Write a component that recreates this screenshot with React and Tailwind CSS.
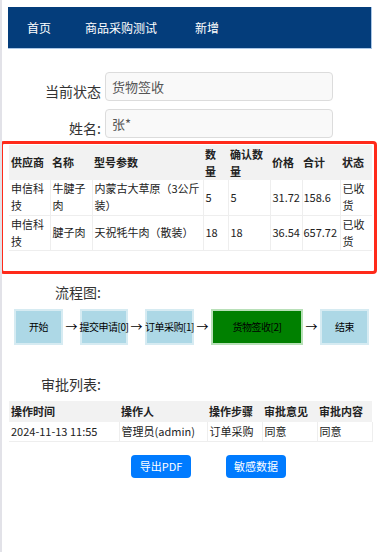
import React from "react";

const font = { fontFamily: '"Noto Sans CJK SC", "Noto Sans", sans-serif' };

export default function App() {
  const flow = [
    { t: "开始", w: "w-[49px]", cur: false },
    { t: "提交申请[0]", w: "w-[48px]", cur: false },
    { t: "订单采购[1]", w: "w-[49px]", cur: false },
    { t: "货物签收[2]", w: "w-[92px]", cur: true },
    { t: "结束", w: "w-[49px]", cur: false },
  ];
  const td = "px-[2px] border-r border-[#eee] align-middle";
  const th = "text-left font-bold px-[2px] align-middle";
  return (
    <div style={font} className="w-[379px] h-[552px] bg-white relative overflow-hidden text-[#333]">
      <div className="absolute left-0 top-0 bottom-0 w-[2px] bg-[#e2e2e8]" />
      {/* header */}
      <div className="pt-[7px] pl-[8px]">
        <div className="w-[364px] h-[42px] bg-[#043d7b] border-b border-r border-[#a9c6e6] flex items-center text-white text-[12px] leading-[16px]">
          <span className="ml-[19px]">首页</span>
          <span className="ml-[34px]">商品采购测试</span>
          <span className="ml-[38px]">新增</span>
        </div>
      </div>

      {/* form */}
      <div className="mt-[23px] flex flex-col gap-[8px]">
        <div className="flex items-end h-[29px]">
          <div className="w-[101px] text-right text-[14px] leading-[20px] text-[#333]">当前状态</div>
          <div className="ml-[4px] w-[228px] h-[29px] rounded-[4px] border border-[#dcdcdc] bg-[#f9f9f9] flex items-center pl-[6px] text-[13px] leading-[18px] text-[#555]">货物签收</div>
        </div>
        <div className="flex items-end h-[29px]">
          <div className="w-[101px] text-right text-[14px] leading-[20px] text-[#333]">姓名:</div>
          <div className="ml-[4px] w-[228px] h-[29px] rounded-[4px] border border-[#dcdcdc] bg-[#f9f9f9] flex items-center pl-[6px] text-[13px] leading-[18px] text-[#555]">张*</div>
        </div>
      </div>

      {/* red box with goods table */}
      <div className="mt-[3px] w-[377px] h-[133px] border-[3px] border-[#ff2a1a] rounded-[4px] pl-[6px] pt-[1px]">
        <table className="w-[363px] table-fixed border-collapse text-[11px] text-[#222] leading-[17px]">
          <colgroup>
            <col className="w-[41px]" />
            <col className="w-[42px]" />
            <col className="w-[111px]" />
            <col className="w-[25px]" />
            <col className="w-[42px]" />
            <col className="w-[32px]" />
            <col className="w-[38px]" />
            <col className="w-[32px]" />
          </colgroup>
          <thead>
            <tr className="bg-[#f2f2f2] h-[35px]">
              <th className={th}>供应商</th>
              <th className={th}>名称</th>
              <th className={th}>型号参数</th>
              <th className={th}>数量</th>
              <th className={th}>确认数量</th>
              <th className={th}>价格</th>
              <th className="text-left font-bold px-[1px] align-middle">合计</th>
              <th className={th}>状态</th>
            </tr>
          </thead>
          <tbody>
            <tr className="h-[35px] border-b border-[#eee]">
              <td className={td}>申信科技</td>
              <td className={td}>牛腱子肉</td>
              <td className={td}>内蒙古大草原（3公斤装）</td>
              <td className={td}>5</td>
              <td className={td}>5</td>
              <td className={td}>31.72</td>
              <td className="px-[1px] border-r border-[#eee] align-middle">158.6</td>
              <td className="px-[2px] align-middle">已收货</td>
            </tr>
            <tr className="h-[35px] border-b border-[#eee]">
              <td className={td}>申信科技</td>
              <td className={td}>腱子肉</td>
              <td className={td}>天祝牦牛肉（散装）</td>
              <td className={td}>18</td>
              <td className={td}>18</td>
              <td className={td}>36.54</td>
              <td className="px-[1px] border-r border-[#eee] align-middle">657.72</td>
              <td className="px-[2px] align-middle">已收货</td>
            </tr>
          </tbody>
        </table>
      </div>

      {/* flow */}
      <div className="mt-[8px] pl-[55px] text-[14px] text-[#333] leading-[20px]">流程图:</div>
      <div className="mt-[7px] pl-[14px] flex items-center h-[36px]">
        {flow.map((f, i) => (
          <React.Fragment key={i}>
            {i > 0 && (
              <div className="w-[17px] text-center text-[12px] leading-[16px] text-black">→</div>
            )}
            <div
              className={`${f.w} h-[36px] flex items-center justify-center whitespace-nowrap text-[10px] leading-[14px] tracking-[-0.5px] text-black border-2 ${
                f.cur ? "bg-[#008000] border-[#b8e0b8]" : "bg-[#add8e6] border-[#d6ebf2]"
              }`}
            >
              {f.t}
            </div>
          </React.Fragment>
        ))}
      </div>

      {/* approvals */}
      <div className="mt-[29px] pl-[41px] text-[14px] text-[#333] leading-[20px]">审批列表:</div>
      <div className="mt-[7px] pl-[9px]">
        <table className="w-[363px] table-fixed border-collapse text-[11px] leading-[15px] text-[#222]">
          <colgroup>
            <col className="w-[110px]" />
            <col className="w-[88px]" />
            <col className="w-[55px]" />
            <col className="w-[55px]" />
            <col className="w-[55px]" />
          </colgroup>
          <thead>
            <tr className="bg-[#f2f2f2] h-[21px]">
              <th className={th}>操作时间</th>
              <th className={th}>操作人</th>
              <th className={th}>操作步骤</th>
              <th className={th}>审批意见</th>
              <th className={th}>审批内容</th>
            </tr>
          </thead>
          <tbody>
            <tr className="h-[19px] border-b border-[#eee]">
              <td className={`${td} whitespace-nowrap`}>2024-11-13 11:55</td>
              <td className={td}>管理员(admin)</td>
              <td className={td}>订单采购</td>
              <td className={td}>同意</td>
              <td className={td}>同意</td>
            </tr>
          </tbody>
        </table>
      </div>

      {/* buttons */}
      <div className="mt-[13px] pl-[131px] flex gap-[35px]">
        <button className="w-[60px] h-[23px] rounded-[4px] bg-[#007bff] text-white text-[11px] leading-[14px] flex items-center justify-center">导出PDF</button>
        <button className="w-[60px] h-[23px] rounded-[4px] bg-[#007bff] text-white text-[11px] leading-[14px] flex items-center justify-center">敏感数据</button>
      </div>
    </div>
  );
}
